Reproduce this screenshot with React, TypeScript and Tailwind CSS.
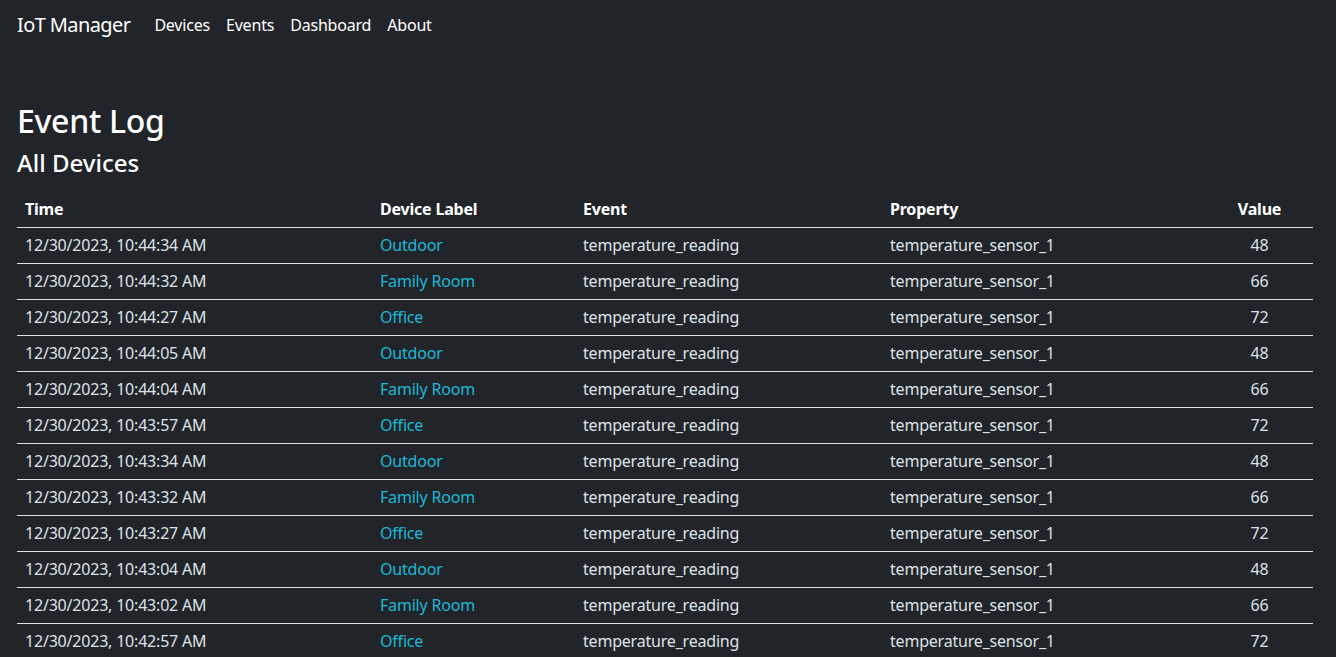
const events = [
  { time: "12/30/2023, 10:44:34 AM", label: "Outdoor", value: 48 },
  { time: "12/30/2023, 10:44:32 AM", label: "Family Room", value: 66 },
  { time: "12/30/2023, 10:44:27 AM", label: "Office", value: 72 },
  { time: "12/30/2023, 10:44:05 AM", label: "Outdoor", value: 48 },
  { time: "12/30/2023, 10:44:04 AM", label: "Family Room", value: 66 },
  { time: "12/30/2023, 10:43:57 AM", label: "Office", value: 72 },
  { time: "12/30/2023, 10:43:34 AM", label: "Outdoor", value: 48 },
  { time: "12/30/2023, 10:43:32 AM", label: "Family Room", value: 66 },
  { time: "12/30/2023, 10:43:27 AM", label: "Office", value: 72 },
  { time: "12/30/2023, 10:43:04 AM", label: "Outdoor", value: 48 },
  { time: "12/30/2023, 10:43:02 AM", label: "Family Room", value: 66 },
  { time: "12/30/2023, 10:42:57 AM", label: "Office", value: 72 },
]

const links = ["Devices", "Events", "Dashboard", "About"]

const App = () => {
  return (
    <div className="min-h-screen bg-[#212529] text-[#dee2e6] font-['Noto_Sans',sans-serif]">
      <nav className="flex items-center h-[50px] px-[17px]">
        <span className="text-[20px] text-white tracking-[-0.6px] mr-[16px]">IoT Manager</span>
        <div className="flex">
          {links.map((l) => (
            <a key={l} className="px-[8px] text-[16px] text-white tracking-[-0.2px]">{l}</a>
          ))}
        </div>
      </nav>

      <main className="pl-[17px] pr-[23px] pt-[52px]">
        <h2 className="text-[32px] leading-[38px] font-medium text-white tracking-[-0.3px] mb-[8px]">Event Log</h2>
        <h4 className="text-[24px] leading-[29px] font-medium text-white mb-[14px]">All Devices</h4>

        <table className="w-full text-[16px] border-collapse tracking-[-0.2px]">
          <thead>
            <tr className="h-[36px] border-b border-[#dee2e6] text-white">
              <th className="w-[355px] px-[8px] text-left font-bold">Time</th>
              <th className="w-[203px] px-[8px] text-left font-bold">Device Label</th>
              <th className="w-[307px] px-[8px] text-left font-bold">Event</th>
              <th className="w-[324px] px-[8px] text-left font-bold">Property</th>
              <th className="px-[8px] text-center font-bold">Value</th>
            </tr>
          </thead>
          <tbody>
            {events.map((e, i) => (
              <tr key={i} className="h-[36px] border-b border-[#dee2e6]">
                <td className="px-[8px]">{e.time}</td>
                <td className="px-[8px]">
                  <a className="text-[#1cb8d8]">{e.label}</a>
                </td>
                <td className="px-[8px]">temperature_reading</td>
                <td className="px-[8px]">temperature_sensor_1</td>
                <td className="px-[8px] text-center">{e.value}</td>
              </tr>
            ))}
          </tbody>
        </table>
      </main>
    </div>
  )
}

export default App
